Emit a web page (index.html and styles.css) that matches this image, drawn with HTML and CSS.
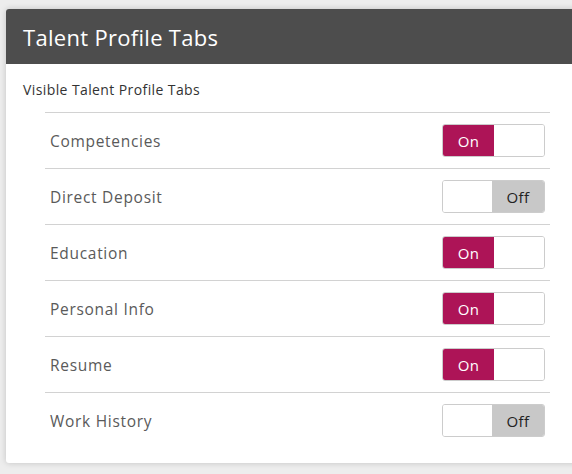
FILE: index.html
```html
<!DOCTYPE html>
<html>
<head>
<meta charset="utf-8">
<link rel="stylesheet" href="styles.css">
</head>
<body>
<div class="page">
  <div class="card">
    <div class="card-header">Talent Profile Tabs</div>
    <div class="card-body">
      <div class="section-label">Visible Talent Profile Tabs</div>
      <div class="list">
        <div class="row">
          <span class="row-label">Competencies</span>
          <div class="toggle on"><span class="seg seg-on">On</span><span class="seg seg-blank"></span></div>
        </div>
        <div class="row">
          <span class="row-label">Direct Deposit</span>
          <div class="toggle off"><span class="seg seg-blank"></span><span class="seg seg-off">Off</span></div>
        </div>
        <div class="row">
          <span class="row-label">Education</span>
          <div class="toggle on"><span class="seg seg-on">On</span><span class="seg seg-blank"></span></div>
        </div>
        <div class="row">
          <span class="row-label">Personal Info</span>
          <div class="toggle on"><span class="seg seg-on">On</span><span class="seg seg-blank"></span></div>
        </div>
        <div class="row">
          <span class="row-label">Resume</span>
          <div class="toggle on"><span class="seg seg-on">On</span><span class="seg seg-blank"></span></div>
        </div>
        <div class="row">
          <span class="row-label">Work History</span>
          <div class="toggle off"><span class="seg seg-blank"></span><span class="seg seg-off">Off</span></div>
        </div>
      </div>
    </div>
  </div>
</div>
</body>
</html>
```
FILE: styles.css
```css
html, body {
  margin: 0;
  padding: 0;
}
body {
  background: #ededed;
  overflow: hidden;
  width: 572px;
  height: 474px;
  font-family: "Open Sans", "Liberation Sans", sans-serif;
}
.page {
  padding: 9px 0 0 6px;
}
.card {
  width: 590px;
  background: #ffffff;
  border-radius: 3px;
  box-shadow: 0 0 6px rgba(0, 0, 0, 0.18);
  overflow: hidden;
}
.card-header {
  height: 55px;
  background: #4d4d4d;
  color: #ffffff;
  display: flex;
  align-items: center;
  padding-left: 17px;
  font-size: 22px;
  letter-spacing: 0.3px;
}
.card-body {
  padding: 16px 0 15px 17px;
}
.section-label {
  font-size: 14px;
  letter-spacing: 0.4px;
  line-height: 20px;
  color: #333333;
  margin-bottom: 12px;
}
.list {
  width: 505px;
  margin-left: 22px;
}
.row {
  border-top: 1px solid #d2d2d2;
  padding: 11px 5px;
  display: flex;
  justify-content: space-between;
  align-items: center;
}
.row-label {
  font-size: 15.5px;
  letter-spacing: 0.7px;
  color: #5a5a5a;
}
.toggle {
  width: 103px;
  height: 33px;
  box-sizing: border-box;
  border: 1px solid #cccccc;
  border-radius: 3px;
  display: flex;
  overflow: hidden;
}
.seg {
  display: flex;
  align-items: center;
  justify-content: center;
  font-size: 15px;
  letter-spacing: 0.4px;
}
.on .seg-on {
  width: 51px;
  background: #ad1457;
  color: #ffffff;
}
.on .seg-blank {
  flex: 1;
  background: #ffffff;
}
.off .seg-blank {
  width: 49px;
  background: #ffffff;
}
.off .seg-off {
  flex: 1;
  background: #c8c8c8;
  color: #222222;
}
```
